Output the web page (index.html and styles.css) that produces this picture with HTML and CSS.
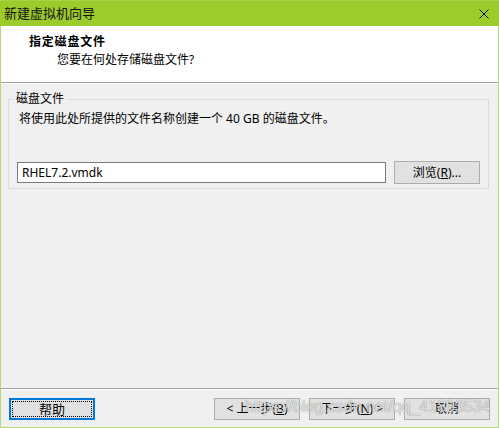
FILE: index.html
```html
<!DOCTYPE html>
<html lang="zh-CN">
<head>
    <meta charset="UTF-8">
    <title>新建虚拟机向导</title>
    <link rel="stylesheet" href="styles.css">
</head>
<body>

    <div class="wizard">
        <div class="title-bar">
            <span class="title-text">新建虚拟机向导</span>
            <svg class="close-icon" viewBox="0 0 10 10" xmlns="http://www.w3.org/2000/svg">
                <path d="M0.5 0.5 L9.5 9.5 M9.5 0.5 L0.5 9.5" stroke="#000" stroke-width="1" fill="none"/>
            </svg>
        </div>

        <div class="wizard-header">
            <div class="step-title">指定磁盘文件</div>
            <div class="step-subtitle">您要在何处存储磁盘文件?</div>
        </div>

        <div class="wizard-body">
            <fieldset class="group-box">
                <legend>磁盘文件</legend>
                <p class="group-text">将使用此处所提供的文件名称创建一个 40 GB 的磁盘文件。</p>
                <div class="file-row">
                    <input type="text" class="file-input" value="RHEL7.2.vmdk">
                    <button class="btn">浏览(<u>R</u>)...</button>
                </div>
            </fieldset>
        </div>

        <div class="wizard-footer">
            <button class="btn btn-focus"><span class="focus-ring">帮助</span></button>
            <div class="nav-buttons">
                <button class="btn">&lt; 上一步(<u>B</u>)</button>
                <button class="btn">下一步(<u>N</u>) &gt;</button>
                <button class="btn">取消</button>
            </div>
            <span class="watermark">https://blog.csdn.net/qq_41893534</span>
        </div>
    </div>

</body>
</html>
```

FILE: styles.css
```css
body {
    margin: 0;
    font-family: "Noto Sans", "Noto Sans CJK SC", sans-serif;
    font-size: 12px;
    color: #000;
}
.wizard {
    position: relative;
    width: 499px;
    height: 428px;
    box-sizing: border-box;
    border: 1px solid #b6d77e;
    border-top: none;
    display: flex;
    flex-direction: column;
    background-color: #f0f0f0;
}
.title-bar {
    height: 26px;
    margin: 0 -1px;
    padding: 0 10px 0 4px;
    background-color: #9ccc2c;
    border-top: 1px solid #a8d244;
    box-sizing: border-box;
    display: flex;
    align-items: center;
    justify-content: space-between;
}
.title-text {
    font-size: 13px;
    line-height: 16px;
    color: #111;
    margin-top: -1px;
}
.close-icon {
    width: 10px;
    height: 10px;
}
.wizard-header {
    height: 48px;
    background-color: #fff;
    border-bottom: 1px solid #a0a0a0;
    padding: 8px 0 0 28px;
}
.step-title {
    font-weight: 700;
    line-height: 16px;
    letter-spacing: 0.8px;
}
.step-subtitle {
    line-height: 16px;
    margin: 2px 0 0 28px;
}
.wizard-body {
    flex: 1;
    padding: 7px 9px 0 7px;
    border-top: 1px solid #fff;
}
.group-box {
    margin: 0;
    padding: 0 0 4px 0;
    border: 1px solid #dcdcdc;
    min-width: 0;
}
.group-box legend {
    margin-left: 5px;
    padding: 0 2px;
    line-height: 16px;
}
.group-text {
    margin: 4px 0 0 10px;
    line-height: 16px;
}
.file-row {
    display: flex;
    align-items: center;
    gap: 8px;
    margin-top: 34px;
    padding: 0 8px;
}
.file-input {
    width: 369px;
    height: 21px;
    box-sizing: border-box;
    margin: 0;
    padding: 0 4px;
    border: 1px solid #7a7a7a;
    font-family: "Noto Sans", "Noto Sans CJK SC", sans-serif;
    font-size: 12px;
    color: #000;
    background-color: #fff;
}
.btn {
    width: 86px;
    height: 23px;
    box-sizing: border-box;
    margin: 0;
    padding: 0;
    border: 1px solid #adadad;
    background-color: #e1e1e1;
    font-family: "Noto Sans", "Noto Sans CJK SC", sans-serif;
    font-size: 12px;
    line-height: 16px;
    color: #000;
}
.wizard-footer .btn {
    height: 22px;
}
.wizard-footer {
    height: 39px;
    box-sizing: border-box;
    border-top: 1px solid #a0a0a0;
    box-shadow: inset 0 1px #fff;
    padding: 9px 8px 0 8px;
    display: flex;
    justify-content: space-between;
    align-items: flex-start;
}
.nav-buttons {
    display: flex;
    gap: 9px;
}
.btn-focus {
    border: 2px solid #0078d7;
    padding: 1px;
}
.focus-ring {
    display: flex;
    align-items: center;
    justify-content: center;
    height: 100%;
    box-sizing: border-box;
    border: 1px dotted #000;
    font-size: 13px;
}
/* faint site stamp over the button row */
.watermark {
    position: absolute;
    left: 244px;
    top: 398px;
    font-family: "Liberation Sans", sans-serif;
    font-size: 16px;
    line-height: 18px;
    color: rgba(255, 255, 255, 0.8);
    text-shadow: 0 0 1px rgba(0, 0, 0, 0.6);
    pointer-events: none;
    white-space: nowrap;
}
```
